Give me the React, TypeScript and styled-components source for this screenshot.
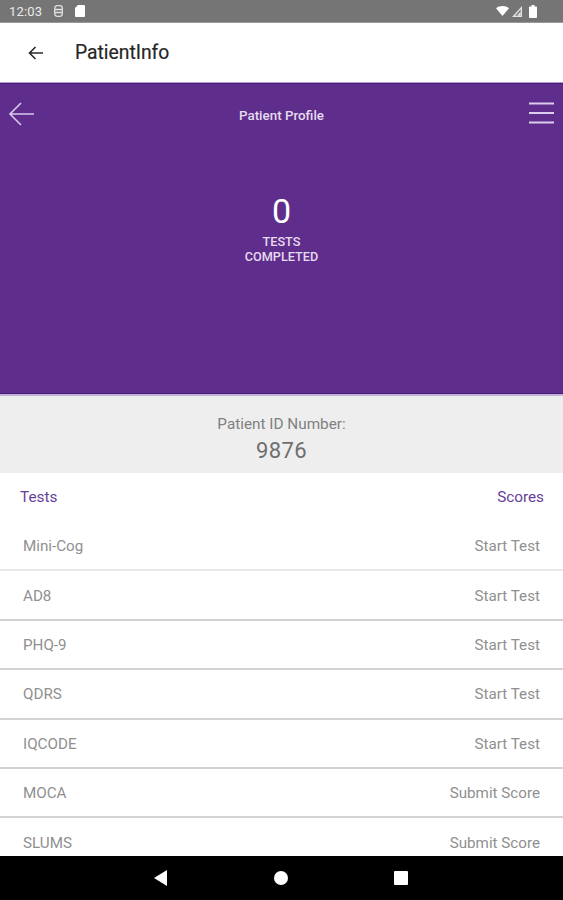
import React, {FC} from 'react';
import styled, {createGlobalStyle} from 'styled-components';

//region Data
interface TestRow {
    name: string,
    action: string,
}

const rows: TestRow[] = [
    {name: 'Mini-Cog', action: 'Start Test'},
    {name: 'AD8', action: 'Start Test'},
    {name: 'PHQ-9', action: 'Start Test'},
    {name: 'QDRS', action: 'Start Test'},
    {name: 'IQCODE', action: 'Start Test'},
    {name: 'MOCA', action: 'Submit Score'},
    {name: 'SLUMS', action: 'Submit Score'},
];
//endregion

//region Styled
const Global = createGlobalStyle`
  html, body {
    margin: 0;
    padding: 0;
    background: #fff;
    overflow: hidden;
  }
  * { box-sizing: border-box; }
`;

const Screen = styled.div`
  width: 563px;
  height: 900px;
  display: flex;
  flex-direction: column;
  overflow: hidden;
  font-family: Roboto, "Liberation Sans", sans-serif;
`;

const StatusBar = styled.div`
  height: 23px;
  flex: none;
  background: #757575;
  border-bottom: 1px solid #999;
  display: flex;
  align-items: center;
  padding: 0 26px 0 9px;
  color: #fff;
`;

const Clock = styled.span`
  font-size: 13px;
  letter-spacing: 0.2px;
  opacity: 0.85;
`;

const StatusLeft = styled.div`
  display: flex;
  align-items: center;
  gap: 12px;
  flex: 1;
`;

const StatusRight = styled.div`
  display: flex;
  align-items: center;
  gap: 3px;
`;

const AppBar = styled.div`
  height: 59px;
  flex: none;
  background: #fff;
  display: flex;
  align-items: center;
  padding: 0 0 0 28px;
  gap: 32px;
`;

const AppTitle = styled.span`
  font-size: 19.3px;
  font-weight: 400;
  color: #262626;
  -webkit-text-stroke: 0.2px #262626;
`;

const Hero = styled.div`
  height: 314px;
  flex: none;
  background: #5f2d8c;
  border-top: 1px solid #b79fd2;
  border-bottom: 2px solid #c4b2da;
  box-shadow: inset 0 1px 0 #47197a, inset 0 -1px 0 #47197a;
  display: flex;
  flex-direction: column;
  align-items: center;
  position: relative;
`;

const HeroTitle = styled.div`
  margin-top: 25px;
  font-size: 13.4px;
  font-weight: 500;
  color: #e6dcef;
`;

const Count = styled.div`
  margin-top: 68px;
  font-size: 34px;
  line-height: 40px;
  color: #fff;
`;

const CountLabel = styled.div`
  margin-top: 3px;
  font-size: 12.7px;
  line-height: 15px;
  font-weight: 500;
  text-align: center;
  color: #e6dcef;
`;

const HeroIcon = styled.svg<{$side: 'left' | 'right'}>`
  position: absolute;
  top: 18px;
  ${p => p.$side === 'left' ? 'left: 8px;' : 'right: 9px;'}
`;

const IdPanel = styled.div`
  height: 77px;
  flex: none;
  background: #eeeeee;
  display: flex;
  flex-direction: column;
  align-items: center;
  padding-top: 19px;
  color: #808080;
`;

const IdLabel = styled.div`
  font-size: 15.3px;
  line-height: 18px;
`;

const IdValue = styled.div`
  margin-top: 3px;
  font-size: 22px;
  line-height: 30px;
  letter-spacing: 0.4px;
  color: #6e6e6e;
`;

const ListHeader = styled.div`
  height: 49px;
  flex: none;
  display: flex;
  justify-content: space-between;
  align-items: center;
  padding: 0 19px 1px 20px;
  font-size: 15.3px;
  color: #67409a;
`;

const Row = styled.div`
  height: 49.4px;
  flex: none;
  display: flex;
  justify-content: space-between;
  align-items: center;
  padding: 1px 23px 0;
  font-size: 15.2px;
  color: #909090;
  border-bottom: 2px solid #d2d2d2;

  &:first-child {
    border-bottom-color: #e8e8e8;
  }
`;

const List = styled.div`
  flex: 1;
  min-height: 0;
  overflow: hidden;
`;

const NavBar = styled.div`
  height: 44px;
  flex: none;
  background: #000;
  display: flex;
  align-items: center;
  justify-content: center;
  gap: 106px;
  padding-right: 1px;
`;
//endregion

const App: FC = () => {
    return (
        <Screen>
            <Global/>
            <StatusBar>
                <StatusLeft>
                    <Clock>12:03</Clock>
                    <svg width="9" height="12" viewBox="0 0 9 12" fill="none" stroke="#e0e0e0" strokeWidth="1.3">
                        <rect x="0.7" y="0.7" width="7.6" height="10.6" rx="2.5"/>
                        <path d="M1 4.5h7M1 7.5h7"/>
                    </svg>
                    <svg width="10" height="12" viewBox="0 0 10 12" fill="#fff" style={{marginTop: -1}}>
                        <path d="M3 0H9a1 1 0 0 1 1 1V11a1 1 0 0 1-1 1H1a1 1 0 0 1-1-1V3z"/>
                    </svg>
                </StatusLeft>
                <StatusRight>
                    <svg width="13" height="10" viewBox="0 0 13 10" fill="#fff">
                        <path d="M0 2.2C3.5 -0.7 9.5 -0.7 13 2.2L6.5 10z"/>
                    </svg>
                    <svg width="10" height="11" viewBox="0 0 10 11" fill="#e4e4e4">
                        <path d="M10 0V11H0zM8.7 3.3L3.2 9.7H8.7z" fillRule="evenodd"/>
                        <path d="M8.7 5.5V9.7H5z"/>
                    </svg>
                    <svg width="8" height="13" viewBox="0 0 8 13" fill="#fff" style={{marginLeft: 4}}>
                        <path d="M2.5 0h3v1.5H7.2a.8.8 0 0 1 .8.8V12.2a.8.8 0 0 1-.8.8H.8a.8.8 0 0 1-.8-.8V2.3a.8.8 0 0 1 .8-.8H2.5z"/>
                    </svg>
                </StatusRight>
            </StatusBar>
            <AppBar>
                <svg width="15" height="14" viewBox="0 0 15 14" fill="none" stroke="#2a2a2a" strokeWidth="1.6">
                    <path d="M15 7H2M7.5 1L1.5 7l6 6"/>
                </svg>
                <AppTitle>PatientInfo</AppTitle>
            </AppBar>
            <Hero>
                <HeroIcon $side="left" width="26" height="26" viewBox="0 0 26 26" fill="none" stroke="#d9c8ea" strokeWidth="1.6">
                    <path d="M26 13H2M13 2L2 13l11 11"/>
                </HeroIcon>
                <HeroTitle>Patient Profile</HeroTitle>
                <Count>0</Count>
                <CountLabel>TESTS<br/>COMPLETED</CountLabel>
                <HeroIcon $side="right" width="26" height="24" viewBox="0 0 26 24" fill="none" stroke="#dccdec" strokeWidth="2.2">
                    <path d="M1 2.5H26M1 12H26M1 21.5H26"/>
                </HeroIcon>
            </Hero>
            <IdPanel>
                <IdLabel>Patient ID Number:</IdLabel>
                <IdValue>9876</IdValue>
            </IdPanel>
            <ListHeader>
                <span>Tests</span>
                <span>Scores</span>
            </ListHeader>
            <List>
                {rows.map(row => (
                    <Row key={row.name}>
                        <span>{row.name}</span>
                        <span>{row.action}</span>
                    </Row>
                ))}
            </List>
            <NavBar>
                <svg width="14" height="16" viewBox="0 0 14 16" fill="#fff"><path d="M13 0V16L0 8z"/></svg>
                <svg width="14" height="14" viewBox="0 0 14 14" fill="#fff"><circle cx="7" cy="7" r="7"/></svg>
                <svg width="14" height="14" viewBox="0 0 14 14" fill="#fff"><rect width="14" height="14" rx="1"/></svg>
            </NavBar>
        </Screen>
    );
};

export default App;
